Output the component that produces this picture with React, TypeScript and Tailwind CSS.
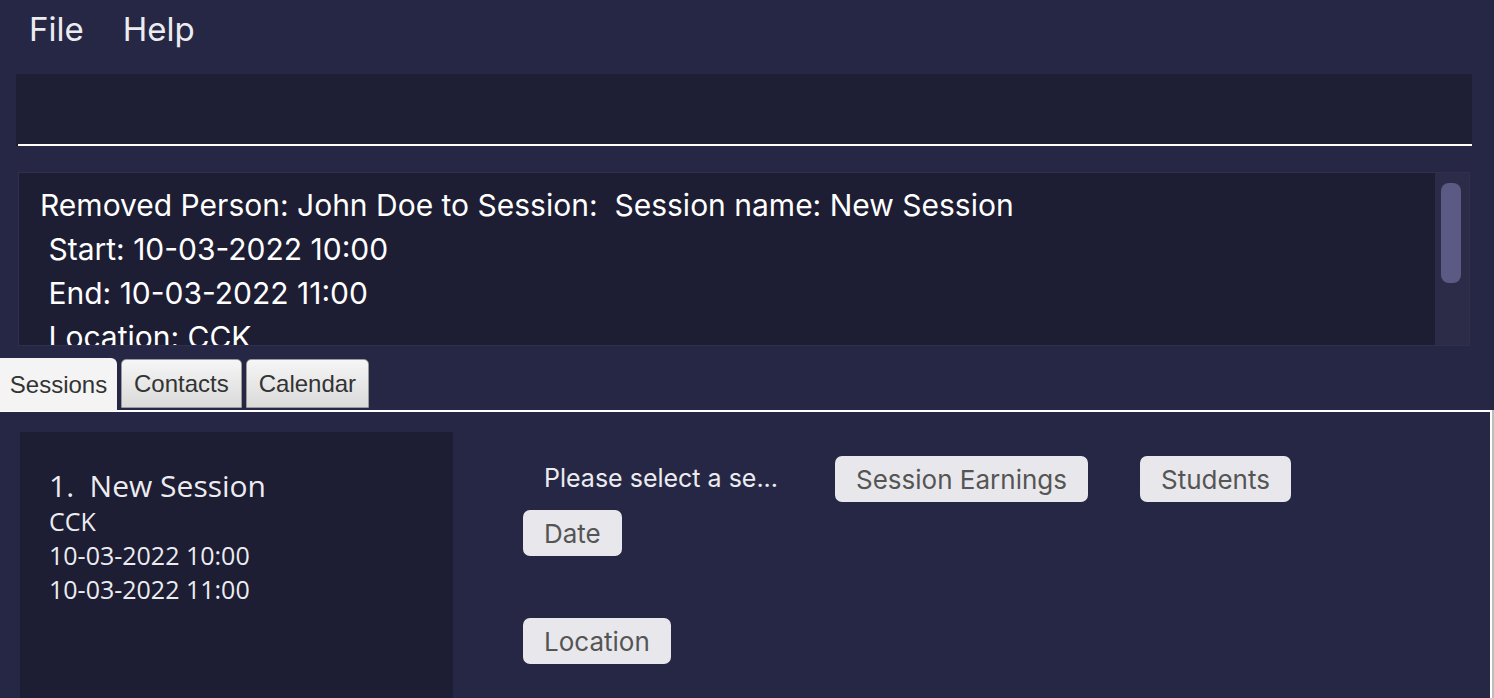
import React from 'react';

const sans = { fontFamily: 'Inter, "Liberation Sans", sans-serif' };

const resultLines = [
  'Removed Person: John Doe to Session:  Session name: New Session',
  ' Start: 10-03-2022 10:00',
  ' End: 10-03-2022 11:00',
  ' Location: CCK',
];

const PillButton = ({ label, className = '' }: { label: string; className?: string }) => (
  <div
    className={`flex h-[46px] items-center rounded-[7px] bg-[#e8e8ec] px-[21px] text-[26px] text-[#555555] ${className}`}
  >
    {label}
  </div>
);

const Tab = ({ label, active }: { label: string; active?: boolean }) =>
  active ? (
    <div className="relative z-10 flex h-[53px] w-[117px] items-center justify-center rounded-tr-[6px] bg-[#f4f4f4] text-[24px] text-[#333333]">
      {label}
    </div>
  ) : (
    <div className="mt-[1px] ml-[4px] flex h-[49px] items-center justify-center rounded-t-[5px] border border-[#9a9a9a] bg-gradient-to-b from-[#f6f6f6] to-[#dadada] px-[12px] text-[24px] text-[#333333]">
      {label}
    </div>
  );

export default function App() {
  return (
    <div className="flex h-[698px] w-[1494px] flex-col overflow-hidden bg-[#262745] text-white" style={sans}>
      {/* Menu bar */}
      <div className="flex h-[60px] items-center text-[33px] text-[#ececf0]">
        <span className="ml-[29px]">File</span>
        <span className="ml-[39px]">Help</span>
      </div>

      {/* Command box */}
      <div className="mt-[14px] ml-[16px] h-[72px] w-[1456px] bg-[#1e1e35]">
        <div className="ml-[2px] h-full border-b-2 border-white" />
      </div>

      {/* Result display */}
      <div className="mt-[26px] ml-[18px] flex h-[174px] w-[1452px] border border-[#30304e]">
        <div className="flex-1 overflow-hidden bg-[#1d1d33] pt-[10px] pl-[21px] text-[30px] leading-[44px]">
          {resultLines.map((line) => (
            <div key={line} className="whitespace-pre">
              {line}
            </div>
          ))}
        </div>
        <div className="w-[34px] bg-[#2c2c48] pt-[10px] pl-[6px]">
          <div className="h-[100px] w-[20px] rounded-[8px] bg-[#5b5a85]" />
        </div>
      </div>

      {/* Tabs */}
      <div className="mt-[12px] flex h-[52px] items-start" style={{ fontFamily: '"Liberation Sans", Arial, sans-serif' }}>
        <Tab label="Sessions" active />
        <Tab label="Contacts" />
        <Tab label="Calendar" />
      </div>

      {/* Tab content */}
      <div className="flex flex-1 border-r-2 border-[#bdbdbd]">
        <div className="flex flex-1 border-t-2 border-r-2 border-white pt-[20px] pl-[20px]">
          <div className="w-[433px] bg-[#1d1d33] pt-[36px] pl-[29px] text-[#ececf0]" style={{ fontFamily: '"Open Sans", "Noto Sans", sans-serif' }}>
            <div className="text-[30px] leading-[36px] whitespace-pre">1.  New Session</div>
            <div className="text-[25px] leading-[34px]">CCK</div>
            <div className="text-[25px] leading-[34px]">10-03-2022 10:00</div>
            <div className="text-[25px] leading-[34px]">10-03-2022 11:00</div>
          </div>

          <div className="ml-[70px] flex flex-col pt-[24px]">
            <div className="flex items-center">
              <div className="w-[312px] px-[21px] text-[25px] text-[#ececf0]">Please select a se...</div>
              <PillButton label="Session Earnings" />
              <PillButton label="Students" className="ml-[52px]" />
            </div>
            <div className="mt-[8px] flex">
              <PillButton label="Date" />
            </div>
            <div className="mt-[62px] flex">
              <PillButton label="Location" />
            </div>
          </div>
        </div>
      </div>
    </div>
  );
}
